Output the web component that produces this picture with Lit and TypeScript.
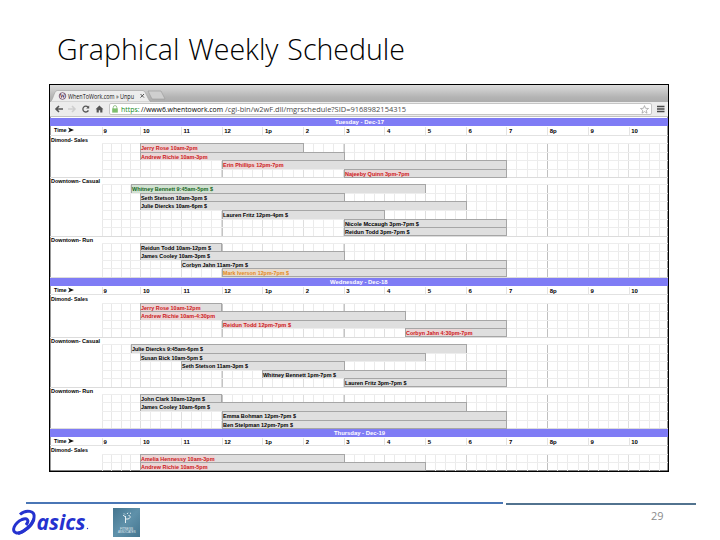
import { LitElement, html, css, svg } from 'lit';
import { customElement, property } from 'lit/decorators.js';

interface Shift {
  name: string;
  from: number;
  to: number;
  width: number;
  tone?: string;
}

interface Area {
  label: string;
  width: number;
  shifts: Shift[];
}

interface Day {
  title: string;
  width: number;
  areas: Area[];
}

const HOURS = ['9', '10', '11', '12', '1p', '2', '3', '4', '5', '6', '7', '8p', '9', '10'];

const s = (name: string, from: number, to: number, width: number, tone = ''): Shift => ({
  name, from, to, width, tone,
});

const sales = (shifts: Shift[]): Area => ({ label: 'Dimond- Sales', width: 37, shifts });
const casual = (shifts: Shift[]): Area => ({ label: 'Downtown- Casual', width: 49, shifts });
const run = (shifts: Shift[]): Area => ({ label: 'Downtown- Run', width: 42, shifts });

const DAYS: Day[] = [
  {
    title: 'Tuesday - Dec-17',
    width: 49,
    areas: [
      sales([
        s('Jerry Rose 10am-2pm', 10, 14, 56.5, 'red'),
        s('Andrew Richie 10am-3pm', 10, 15, 66.5, 'red'),
        s('Erin Phillips 12pm-7pm', 12, 19, 60.5, 'red'),
        s('Najeeby Quinn 3pm-7pm', 15, 19, 64.5, 'red'),
      ]),
      casual([
        s('Whitney Bennett 9:45am-5pm $', 9.75, 17, 81, 'green'),
        s('Seth Stetson 10am-3pm $', 10, 15, 66),
        s('Julie Diercks 10am-6pm $', 10, 18, 66),
        s('Lauren Fritz 12pm-4pm $', 12, 16, 65),
        s('Nicole Mccaugh 3pm-7pm $', 15, 19, 74),
        s('Reidun Todd 3pm-7pm $', 15, 19, 64.5),
      ]),
      run([
        s('Reidun Todd 10am-12pm $', 10, 12, 70),
        s('James Cooley 10am-3pm $', 10, 15, 69),
        s('Corbyn Jahn 11am-7pm $', 11, 19, 66),
        s('Mark Iverson 12pm-7pm $', 12, 19, 66, 'orange'),
      ]),
    ],
  },
  {
    title: 'Wednesday - Dec-18',
    width: 57.5,
    areas: [
      sales([
        s('Jerry Rose 10am-12pm', 10, 12, 59.5, 'red'),
        s('Andrew Richie 10am-4:30pm', 10, 16.5, 74, 'red'),
        s('Reidun Todd 12pm-7pm $', 12, 19, 68, 'red'),
        s('Corbyn Jahn 4:30pm-7pm', 16.5, 19, 66.5, 'red'),
      ]),
      casual([
        s('Julie Diercks 9:45am-6pm $', 9.75, 18, 71),
        s('Susan Bick 10am-5pm $', 10, 17, 61.5),
        s('Seth Stetson 11am-3pm $', 11, 15, 66),
        s('Whitney Bennett 1pm-7pm $', 13, 19, 73),
        s('Lauren Fritz 3pm-7pm $', 15, 19, 61.5),
      ]),
      run([
        s('John Clark 10am-12pm $', 10, 12, 64),
        s('James Cooley 10am-6pm $', 10, 18, 69),
        s('Emma Bohman 12pm-7pm $', 12, 19, 73),
        s('Ben Stelpman 12pm-7pm $', 12, 19, 70),
      ]),
    ],
  },
  {
    title: 'Thursday - Dec-19',
    width: 51,
    areas: [
      sales([
        s('Amelia Hennessy 10am-3pm', 10, 15, 73.5, 'red'),
        s('Andrew Richie 10am-5pm', 10, 17, 66.5, 'red'),
      ]),
    ],
  },
];

// one line of text set to an exact width
@customElement('fit-text')
export class FitText extends LitElement {
  static styles = css`
    :host {
      display: block;
      flex: none;
      line-height: 0;
    }
    svg {
      display: block;
      overflow: visible;
    }
    text {
      fill: currentColor;
    }
  `;

  @property() text = '';
  @property({ type: Number }) width = 10;
  @property({ type: Number }) height = 8;
  @property({ type: Number }) base = 6;

  render() {
    return html`
      <svg width=${this.width} height=${this.height}>
        ${svg`<text x="0" y=${this.base} textLength=${this.width} lengthAdjust="spacingAndGlyphs">${this.text}</text>`}
      </svg>
    `;
  }
}

@customElement('schedule-day')
export class ScheduleDay extends LitElement {
  static styles = css`
    :host {
      display: block;
      font: bold 6px 'Liberation Sans', Arial, sans-serif;
      color: #000;
    }
    .title {
      display: flex;
      justify-content: center;
      margin-top: 0.8px;
      height: 7.8px;
      background: #7f7cf5;
      color: #fff;
    }
    .hours,
    .lane {
      display: grid;
      grid-template-columns: 52.3px repeat(4, 9.5px) repeat(52, 10.175px);
    }
    .hours {
      box-sizing: border-box;
      height: 9.8px;
      border-bottom: 1px solid #e2e2e2;
      line-height: 9px;
    }
    .hour {
      grid-column: span 4;
      padding-left: 1.6px;
      white-space: nowrap;
      border-left: 1px solid #e4e4e4;
      margin-top: 1px;
      line-height: 8px;
    }
    .time + .hour {
      padding-left: 0.2px;
    }
    .time {
      padding-left: 4px;
      display: flex;
      align-items: center;
      gap: 1px;
    }
    .label {
      height: 7.2px;
      padding-left: 0.5px;
    }
    .lanes {
      border-bottom: 1px solid #dcdcdc;
      margin-bottom: -1px;
      background:
        linear-gradient(#c4c4c4, #c4c4c4) 172px 0 / 1px 100% no-repeat,
        linear-gradient(#c4c4c4, #c4c4c4) 294px 0 / 1px 100% no-repeat,
        linear-gradient(#d0d0d0, #d0d0d0) 416px 0 / 1px 100% no-repeat,
        linear-gradient(#c0c0c0, #c0c0c0) 497px 0 / 1px 100% no-repeat,
        repeating-linear-gradient(90deg, #dedede 0 1px, transparent 1px 40.7px) 90.3px 0 / 530px 100% no-repeat,
        repeating-linear-gradient(90deg, #ebebeb 0 1px, transparent 1px 10.175px) 90.3px 0 / 530px 100% no-repeat,
        repeating-linear-gradient(90deg, #e8e8e8 0 1px, transparent 1px 9.5px) 52.3px 0 / 38px 100% no-repeat;
    }
    .lane {
      height: 8.55px;
      background: linear-gradient(#ededed, #ededed) 52.3px 0 / 570px 1px no-repeat;
    }
    .bar {
      box-sizing: border-box;
      height: 8.55px;
      display: flex;
      border: solid #a6a6a6;
      border-width: 1px 1px 0 1px;
      background: #dfdfdf;
      margin-right: -0.8px;
    }
    .lane:last-child .bar {
      height: 9px;
      border-bottom-width: 1px;
    }
    .red {
      color: #cc1720;
      background: #ebd6d6;
    }
    .green {
      color: #14651c;
      background: #d2e2d2;
    }
    .orange {
      color: #e58a1c;
      background: #e8dccd;
    }
  `;

  @property({ attribute: false }) day!: Day;

  column(hour: number) {
    return (hour - 9) * 4 + 2;
  }

  render() {
    return html`
      <div class="title"><fit-text text=${this.day.title} width=${this.day.width} height="7.8" base="6"></fit-text></div>
      <div class="hours">
        <div class="time">
          <fit-text text="Time" width="12.5" height="8" base="6.3"></fit-text>
          <svg width="6" height="6" viewBox="0 0 6 6"><path d="M0 0.4 L6 3 L0 5.6 L1.6 3 Z" fill="#111" /></svg>
        </div>
        ${HOURS.map((h) => html`<div class="hour">${h}</div>`)}
      </div>
      ${this.day.areas.map(
        (area) => html`
          <div class="label"><fit-text text=${area.label} width=${area.width} height="7" base="6"></fit-text></div>
          <div class="lanes">
            ${area.shifts.map(
              (shift) => html`
                <div class="lane">
                  <div class="bar" style="grid-column: ${this.column(shift.from)} / ${this.column(shift.to)}">
                    <fit-text class=${shift.tone ?? ''} text=${shift.name} width=${shift.width} height="7.5" base="5.8"></fit-text>
                  </div>
                </div>
              `
            )}
          </div>
        `
      )}
    `;
  }
}

@customElement('browser-bar')
export class BrowserBar extends LitElement {
  static styles = css`
    :host {
      display: block;
      font-family: 'Open Sans', 'Noto Sans', sans-serif;
    }
    .strip {
      height: 17px;
      display: flex;
      align-items: flex-end;
      background: linear-gradient(#dcdcdc, #b4b4b4 70%, #acacac);
    }
    .strip svg {
      display: block;
    }
    .tab-name {
      font-size: 6.6px;
      fill: #111;
    }
    .logo-letter {
      font: bold 5.5px 'Liberation Serif', serif;
      fill: #4a2545;
    }
    .toolbar {
      box-sizing: border-box;
      height: 15.4px;
      display: flex;
      align-items: center;
      background: #ececec;
      border-bottom: 1px solid #c2c2c2;
      padding: 0 3px 0 4px;
    }
    .address {
      box-sizing: border-box;
      flex: 1;
      height: 12.6px;
      margin: 0 5px 0 3px;
      padding: 0 2px 0 2px;
      display: flex;
      align-items: center;
      gap: 3px;
      background: #fff;
      border: 1px solid #c6c6c6;
      border-radius: 2px;
    }
    .address svg {
      flex: none;
    }
    .address .url {
      font-size: 7.8px;
      flex: 1;
    }
    .secure {
      fill: #138a1e;
    }
    .host {
      fill: #000;
    }
    .path {
      fill: #4a4a4a;
    }
  `;

  render() {
    return html`
      <div class="strip">
        <svg width="120" height="14" viewBox="0 0 120 14">
          <path d="M98 3 H111 L115 11 H102 Z" fill="#cfcfcf" stroke="#999" stroke-width=".6" />
          <path d="M0 14 C3 13 4 3 7 2.5 H93 C96 3 98 13 101 14 Z" fill="#ededed" stroke="#a0a0a0" stroke-width=".6" />
          <circle cx="12.5" cy="8" r="3.3" fill="#fff" stroke="#5a3555" stroke-width=".8" />
          <text class="logo-letter" x="9.8" y="10">W</text>
          <text class="tab-name" x="18" y="10.5" textLength="66" lengthAdjust="spacingAndGlyphs">WhenToWork.com » Unpu</text>
          <path d="M90.5 6 L94 9.6 M94 6 L90.5 9.6" stroke="#555" stroke-width="1" />
        </svg>
      </div>
      <div class="toolbar">
        <svg width="52" height="12" viewBox="0 0 52 12">
          <path d="M9 6 H2 M5 3 L2 6 L5 9" fill="none" stroke="#555" stroke-width="1.6" />
          <path d="M14 6 H21 M18 3 L21 6 L18 9" fill="none" stroke="#cfcfcf" stroke-width="1.6" />
          <path d="M34 4.2 A2.9 2.9 0 1 0 34.4 7.4" fill="none" stroke="#555" stroke-width="1.3" />
          <path d="M35.2 2.6 V5.6 H32.2 Z" fill="#555" />
          <path d="M45.4 2.5 L49.4 6.3 H48.4 V9.5 H46.2 V7.2 H44.8 V9.5 H42.6 V6.3 H41.6 Z" fill="#555" />
        </svg>
        <div class="address">
          <svg width="6" height="8" viewBox="0 0 6 8">
            <path d="M1.2 4 V2.4 A1.8 1.8 0 0 1 4.8 2.4 V4" fill="none" stroke="#9ac58f" stroke-width="1" />
            <rect x=".2" y="3.4" width="5.6" height="4.2" fill="#7fbf6e" />
          </svg>
          <svg class="url" height="10">
            <text x="0" y="7.6" textLength="18.5" lengthAdjust="spacingAndGlyphs" class="secure">https:</text>
            <text x="20" y="7.6" textLength="82" lengthAdjust="spacingAndGlyphs" class="host">//www6.whentowork.com</text>
            <text x="104" y="7.6" textLength="181" lengthAdjust="spacingAndGlyphs" class="path">/cgi-bin/w2wF.dll/mgrschedule?SID=9168982154315</text>
          </svg>
          <svg width="9" height="9" viewBox="0 0 9 9">
            <path d="M4.5 .6 L5.6 3.3 L8.5 3.5 L6.3 5.3 L7 8.2 L4.5 6.6 L2 8.2 L2.7 5.3 L.5 3.5 L3.4 3.3 Z" fill="#fff" stroke="#8a8a8a" stroke-width=".6" />
          </svg>
        </div>
        <svg width="8" height="8" viewBox="0 0 8 8">
          <path d="M0 1.5 H7.5 M0 4 H7.5 M0 6.5 H7.5" stroke="#484848" stroke-width="1.5" />
        </svg>
      </div>
    `;
  }
}

@customElement('app-root')
export class AppRoot extends LitElement {
  static styles = css`
    :host {
      display: flex;
      flex-direction: column;
      box-sizing: border-box;
      width: 720px;
      height: 540px;
      overflow: hidden;
      background: #fff;
      font-family: 'Open Sans', 'Noto Sans', sans-serif;
    }
    .heading {
      box-sizing: border-box;
      height: 84px;
      padding: 28px 0 0 56.5px;
      font-size: 29.5px;
      font-weight: 300;
      word-spacing: 1.5px;
      -webkit-text-stroke: 0.3px #000;
      color: #000;
    }
    .shot {
      box-sizing: border-box;
      width: 620px;
      height: 388px;
      margin-left: 49px;
      border: 1px solid #000;
      box-shadow: inset 0 0 0 0.4px #000;
      overflow: hidden;
      flex: none;
    }
    .rules {
      display: flex;
      margin: 30px 0 0 26px;
      height: 5px;
      gap: 3px;
    }
    .rule-left {
      width: 477px;
      height: 2px;
      margin-top: 0.4px;
      background: #4a76b5;
    }
    .rule-right {
      width: 190px;
      height: 2px;
      margin-top: 1px;
      background: #52738f;
    }
    .footer {
      display: flex;
      padding: 1px 57px 0 12px;
      height: 30px;
    }
    .asics {
      overflow: visible;
      margin-top: 2px;
    }
    .asics-name {
      font: italic bold 20.5px 'Open Sans', 'Noto Sans', sans-serif;
      fill: #2532cf;
    }
    .badge {
      margin-left: 23px;
    }
    .badge-name {
      font: 3.6px 'Liberation Sans', sans-serif;
      fill: #e3edf2;
    }
    .page {
      margin-left: auto;
      font-size: 11.5px;
      color: #8b8b8b;
    }
  `;

  render() {
    return html`
      <div class="heading"><fit-text text="Graphical Weekly Schedule" width="348" height="40" base="31.5"></fit-text></div>
      <div class="shot">
        <browser-bar></browser-bar>
        ${DAYS.map((day) => html`<schedule-day .day=${day}></schedule-day>`)}
      </div>
      <div class="rules">
        <div class="rule-left"></div>
        <div class="rule-right"></div>
      </div>
      <div class="footer">
        <svg class="asics" width="78" height="26" viewBox="0 0 78 26">
          <g fill="none" stroke="#2532cf">
            <path d="M8 4.5 C14 -1 23.5 .5 22 8 C20.500 15 10 24 4.500 23 C-1.500 21.500 2.500 13 10 9.500 C15 7.500 18 10 14 15" stroke-width="3" />
            <path d="M22 9 C20 16 13 21.500 6 23.500" stroke-width="3" />
          </g>
          <text class="asics-name" x="24.500" y="19.500" textLength="49" lengthAdjust="spacingAndGlyphs">asics</text>
          <circle cx="75.500" cy="18.500" r=".7" fill="#2532cf" />
        </svg>
        <svg class="badge" width="27" height="29" viewBox="0 0 27 29">
          <defs>
            <linearGradient id="slate" x1="0" y1="0" x2="1" y2="1">
              <stop offset="0" stop-color="#44758f" />
              <stop offset=".5" stop-color="#5f91aa" />
              <stop offset="1" stop-color="#44758f" />
            </linearGradient>
          </defs>
          <rect width="27" height="29" fill="url(#slate)" />
          <path d="M12.500 15 V8 M12.500 11 H15 C18 10.500 17.500 7 15.500 7.500 M12.500 9 L10 7 M14 6 L15 4.800 M11 5.500 L12 6.500 M17 5 L18 5.500" fill="none" stroke="#e6f0f4" stroke-width="1" />
          <text class="badge-name" x="7" y="21.500" textLength="13" lengthAdjust="spacingAndGlyphs">FITNESS</text>
          <text class="badge-name" x="5" y="24.800" textLength="17.500" lengthAdjust="spacingAndGlyphs">ASSOCIATES</text>
        </svg>
        <div class="page"><fit-text text="29" width="12.5" height="14" base="11.5"></fit-text></div>
      </div>
    `;
  }
}
